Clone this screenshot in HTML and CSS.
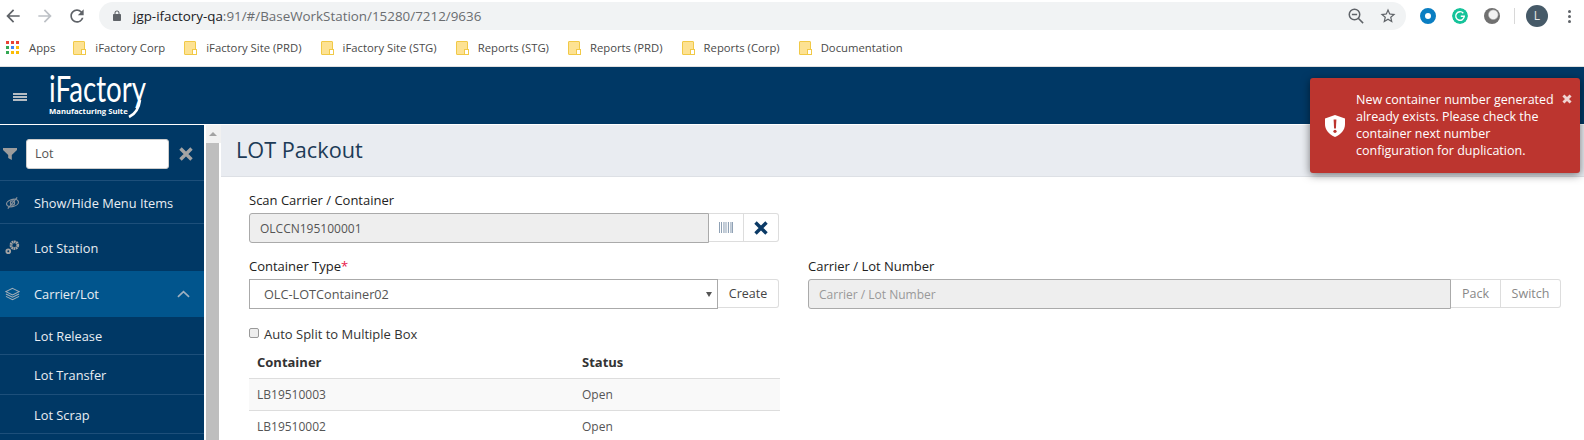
FILE: index.html
```html
<!DOCTYPE html>
<html lang="en">
<head>
    <meta charset="UTF-8">
    <title>LOT Packout | iFactory</title>
    <meta name="viewport" content="width=device-width, initial-scale=1.0">
    <link rel="stylesheet" href="styles.css">
</head>
<body>
    <div class="toolbar">
        <svg class="nav-icon" viewBox="0 0 24 24" fill="#5f6368"><path d="M20 11H7.83l5.59-5.59L12 4l-8 8 8 8 1.41-1.41L7.83 13H20v-2z"/></svg>
        <svg class="nav-icon" viewBox="0 0 24 24" fill="#bdc1c6"><path d="M4 11h12.17l-5.59-5.59L12 4l8 8-8 8-1.41-1.41L16.17 13H4v-2z"/></svg>
        <svg class="nav-icon" viewBox="0 0 24 24" fill="#5f6368"><path d="M17.65 6.35A7.958 7.958 0 0 0 12 4c-4.42 0-7.99 3.58-7.99 8s3.57 8 7.99 8c3.73 0 6.84-2.55 7.73-6h-2.08A5.99 5.99 0 0 1 12 18c-3.31 0-6-2.69-6-6s2.69-6 6-6c1.66 0 3.14.69 4.22 1.78L13 11h7V4l-2.35 2.35z"/></svg>
        <div class="omnibox">
            <svg class="lock" viewBox="0 0 24 24" fill="#5f6368"><path d="M18 8h-1V6c0-2.76-2.24-5-5-5S7 3.24 7 6v2H6c-1.1 0-2 .9-2 2v10c0 1.1.9 2 2 2h12c1.1 0 2-.9 2-2V10c0-1.1-.9-2-2-2zM9 6c0-1.66 1.34-3 3-3s3 1.34 3 3v2H9V6z"/></svg>
            <span class="url"><b>jgp-ifactory-qa</b>:91/#/BaseWorkStation/15280/7212/9636</span>
            <div class="omni-actions">
                <svg class="omni-icon" viewBox="0 0 24 24" fill="none" stroke="#5f6368" stroke-width="2"><circle cx="10" cy="10" r="7"/><path d="M6.5 10h7M15 15l6.5 6.5"/></svg>
                <svg class="omni-icon" viewBox="0 0 24 24" fill="#5f6368"><path d="M22 9.24l-7.19-.62L12 2 9.19 8.63 2 9.24l5.46 4.73L5.82 21 12 17.27 18.18 21l-1.63-7.03L22 9.24zM12 15.4l-3.76 2.27 1-4.28-3.32-2.88 4.38-.38L12 6.1l1.71 4.04 4.38.38-3.32 2.88 1 4.28L12 15.4z"/></svg>
            </div>
        </div>
        <div class="ext ext-blue"></div>
        <svg class="ext" viewBox="0 0 16 16"><circle cx="8" cy="8" r="8" fill="#15c39a"/><path d="M11.300 5.200A4.300 4.300 0 1 0 12.300 8.300H8.800" fill="none" stroke="#fff" stroke-width="1.400"/></svg>
        <div class="ext ext-gray"></div>
        <div class="separator"></div>
        <div class="avatar">L</div>
        <div class="kebab"><i></i><i></i><i></i></div>
    </div>

    <div class="bookmarks">
        <div class="apps-grid">
            <i class="r"></i><i class="r"></i><i class="r"></i>
            <i class="g"></i><i class="b"></i><i class="y"></i>
            <i class="g"></i><i class="y"></i><i class="y"></i>
        </div>
        <span class="mark mark-apps">Apps</span>
        <i class="folder"></i><span class="mark">iFactory Corp</span>
        <i class="folder"></i><span class="mark">iFactory Site (PRD)</span>
        <i class="folder"></i><span class="mark">iFactory Site (STG)</span>
        <i class="folder"></i><span class="mark">Reports (STG)</span>
        <i class="folder"></i><span class="mark">Reports (PRD)</span>
        <i class="folder"></i><span class="mark">Reports (Corp)</span>
        <i class="folder"></i><span class="mark">Documentation</span>
    </div>

    <div class="topbar">
        <div class="hamburger"><i></i><i></i><i></i></div>
        <div class="logo">
            <div class="logo-name">iFactory</div>
            <div class="logo-sub">Manufacturing Suite</div>
            <svg class="logo-tail" viewBox="0 0 14 18" fill="none" stroke="#fff" stroke-width="2.600"><path d="M12 0C11 8 7 14 1 17"/></svg>
        </div>
    </div>

    <div class="main">
        <div class="sidebar">
            <div class="filter">
                <svg class="filter-icon" viewBox="0 0 14 14" fill="#9c9c9c"><path d="M0 1h14v2L8.800 8v5L5.200 11V8L0 3z"/></svg>
                <input class="filter-input" type="text" value="Lot">
                <svg class="filter-clear" viewBox="0 0 14 14" fill="none" stroke="#a3a3a3" stroke-width="3.400"><path d="M1.500 1.500l11 11M12.500 1.500l-11 11"/></svg>
            </div>
            <div class="menu-item h43">
                <svg class="menu-icon" viewBox="0 0 16 16" fill="none" stroke="#87919b" stroke-width="1.300"><ellipse cx="8" cy="8" rx="6.500" ry="3.800" transform="rotate(-14 8 8)"/><circle cx="8" cy="8" r="2.200"/><path d="M3 14L13 2"/></svg>
                Show/Hide Menu Items
            </div>
            <div class="menu-item h47">
                <svg class="menu-icon" viewBox="0 0 16 16" fill="none" stroke="#a3a3a3"><circle cx="10" cy="5" r="3.600" stroke-width="3" stroke-dasharray="1.800 0.500"/><circle cx="3.500" cy="11.500" r="2" stroke-width="2"/></svg>
                Lot Station
            </div>
            <div class="menu-item menu-open">
                <svg class="menu-icon" viewBox="0 0 16 16" fill="none" stroke="#a5b0ba" stroke-width="1.100"><path d="M8 2l7 3.500-7 3.500-7-3.500z"/><path d="M1 8l7 3.500L15 8"/><path d="M1 10.500L8 14l7-3.500"/></svg>
                Carrier/Lot
                <svg class="chevron" viewBox="0 0 14 8" fill="none" stroke="#9fb0bf" stroke-width="1.800"><path d="M1 7l6-5.500L13 7"/></svg>
            </div>
            <div class="sub-item h38">Lot Release</div>
            <div class="sub-item h40">Lot Transfer</div>
            <div class="sub-item h39">Lot Scrap</div>
        </div>

        <div class="scrollbar">
            <div class="scroll-up"></div>
            <div class="scroll-thumb"></div>
        </div>

        <div class="content">
            <h1 class="page-title">LOT Packout</h1>
            <div class="form-grid">
                <div class="field">
                    <label>Scan Carrier / Container</label>
                    <div class="input-group">
                        <input class="form-input" type="text" value="OLCCN195100001" readonly>
                        <button class="addon addon-icon">
                            <svg class="barcode" viewBox="0 0 14 11" fill="#8fa1b5"><path d="M0 0h1v11H0zM2 0h1v11H2zM4 0h.6v11H4zM5.500 0h1v11h-1zM7.500 0h.6v11h-.6zM9 0h1v11H9zM11 0h.6v11H11zM12.500 0h1.500v11h-1.500z"/></svg>
                        </button>
                        <button class="addon addon-icon">
                            <svg class="clear-x" viewBox="0 0 14 14" fill="none" stroke="#0b3a66" stroke-width="3.400"><path d="M1.500 1.500l11 11M12.500 1.500l-11 11"/></svg>
                        </button>
                    </div>
                </div>
                <div></div>
                <div class="field">
                    <label>Container Type<span class="required">*</span></label>
                    <div class="input-group">
                        <div class="select-box">OLC-LOTContainer02<span class="caret"></span></div>
                        <button class="addon addon-text">Create</button>
                    </div>
                </div>
                <div class="field">
                    <label>Carrier / Lot Number</label>
                    <div class="input-group">
                        <input class="form-input" type="text" placeholder="Carrier / Lot Number" readonly>
                        <button class="addon addon-muted">Pack</button>
                        <button class="addon addon-muted">Switch</button>
                    </div>
                </div>
            </div>
            <div class="check-row">
                <input class="check" type="checkbox"> Auto Split to Multiple Box
            </div>
            <table class="grid">
                <tr><th class="col-container">Container</th><th>Status</th></tr>
                <tr class="odd"><td>LB19510003</td><td>Open</td></tr>
                <tr><td>LB19510002</td><td>Open</td></tr>
            </table>
        </div>
    </div>

    <div class="toast">
        <svg class="toast-icon" viewBox="0 0 20 22" fill="#fff"><path d="M10 0l10 3.500V9c0 6-4 10.500-10 13C4 19.500 0 15 0 9V3.500z"/><path d="M8.600 4.500h2.800l-.5 9H9.100z" fill="#bc352f"/><circle cx="10" cy="16.300" r="1.600" fill="#bc352f"/></svg>
        <div class="toast-text">New container number generated already exists. Please check the container next number configuration for duplication.</div>
        <svg class="toast-close" viewBox="0 0 14 14" fill="none" stroke="#f0d4d2" stroke-width="4"><path d="M2 2l10 10M12 2L2 12"/></svg>
    </div>
</body>
</html>
```

FILE: styles.css
```css
* {
    box-sizing: border-box;
}

html, body {
    margin: 0;
    height: 440px;
    overflow: hidden;
    background: white;
    font-family: "Open Sans", Arial, sans-serif;
    font-size: 13px;
    color: #333;
}

i {
    display: block;
}

/* browser chrome */
.toolbar {
    height: 30px;
    padding: 2px 0 0 3px;
    display: flex;
    align-items: center;
}

.nav-icon {
    width: 20px;
    height: 20px;
    margin-right: 12px;
}

.omnibox {
    width: 1307px;
    height: 28px;
    padding: 0 9px 0 12px;
    background: #f1f3f4;
    border-radius: 14px;
    display: flex;
    align-items: center;
}

.lock {
    width: 12px;
    height: 12px;
}

.url {
    margin-left: 10px;
    font-size: 13.400px;
    color: #6a6d70;
}

.url b {
    font-weight: 400;
    color: #202124;
}

.omni-actions {
    margin-left: auto;
    display: flex;
    gap: 14px;
}

.omni-icon {
    width: 18px;
    height: 18px;
}

.ext {
    width: 16px;
    height: 16px;
    margin-left: 16px;
    border-radius: 50%;
}

.ext-blue {
    margin-left: 14px;
    border: 5px solid #0a7ec2;
    background: white;
}

.ext-gray {
    background: radial-gradient(circle at 58% 42%, #f2f2f2 0 4px, #707070 5.500px);
}

.separator {
    width: 1px;
    height: 16px;
    margin-left: 14px;
    background: #d8d8d8;
}

.avatar {
    width: 22px;
    height: 22px;
    margin-left: 11px;
    border-radius: 50%;
    background: #465a68;
    color: #e6e6e6;
    font-size: 12px;
    line-height: 22px;
    text-align: center;
}

.kebab {
    margin-left: 20px;
    display: flex;
    flex-direction: column;
    gap: 2px;
}

.kebab i {
    width: 3px;
    height: 3px;
    border-radius: 50%;
    background: #5f6368;
}

.bookmarks {
    height: 37px;
    padding: 0 0 1px 6px;
    border-bottom: 1px solid #e0e0e0;
    display: flex;
    align-items: center;
}

.apps-grid {
    width: 13px;
    height: 13px;
    display: grid;
    grid-template-columns: repeat(3, 3px);
    grid-template-rows: repeat(3, 3px);
    gap: 2px;
}

.apps-grid .r { background: #ea4335; }
.apps-grid .g { background: #34a853; }
.apps-grid .b { background: #4285f4; }
.apps-grid .y { background: #fbbc05; }

.mark {
    font-size: 11.300px;
    color: #4a4a4a;
    margin-right: 19px;
    white-space: nowrap;
}

.mark-apps {
    margin-left: 10px;
    margin-right: 18px;
}

.folder {
    position: relative;
    width: 12px;
    height: 14px;
    margin-right: 10px;
    background: #fde293;
    border: 1px solid #f1c947;
    border-radius: 1px;
}

.folder::after {
    content: "";
    position: absolute;
    right: -2px;
    bottom: -1px;
    width: 3px;
    height: 4px;
    background: white;
    border: 1px solid #f1c947;
}

/* app */
.topbar {
    height: 57px;
    background: #003865;
    display: flex;
    align-items: flex-start;
}

.hamburger {
    margin: 26px 0 0 13px;
    width: 14px;
    display: flex;
    flex-direction: column;
    gap: 1px;
}

.hamburger i {
    height: 2px;
    background: #b5bcc3;
}

.logo {
    position: relative;
    width: 100px;
    margin: 3px 0 0 22px;
    color: white;
}

.logo-name {
    font-family: Lato, sans-serif;
    font-size: 36px;
    line-height: 36px;
    transform: scaleX(0.77);
    transform-origin: left;
}

.logo-sub {
    font-size: 7.700px;
    line-height: 10px;
    font-weight: 700;
    white-space: nowrap;
}

.logo-tail {
    position: absolute;
    left: 79px;
    top: 30px;
    width: 14px;
    height: 18px;
}

.main {
    margin-top: 1px;
    height: 315px;
    display: flex;
}

.sidebar {
    width: 204px;
    flex-shrink: 0;
    background: #003865;
    color: #e9eef3;
}

.filter {
    height: 56px;
    padding: 2px 0 0 3px;
    border-bottom: 1px solid #1d4f7a;
    display: flex;
    align-items: center;
}

.filter-icon {
    width: 14px;
    height: 14px;
}

.filter-input {
    width: 143px;
    height: 30px;
    margin-left: 9px;
    padding: 0 8px;
    border: 1px solid #ccc;
    border-radius: 3px;
    font-family: inherit;
    font-size: 12.500px;
    color: #555;
}

.filter-clear {
    width: 14px;
    height: 14px;
    margin-left: 10px;
}

.menu-item,
.sub-item {
    padding-left: 34px;
    display: flex;
    align-items: center;
    border-bottom: 1px solid #1d4f7a;
    font-size: 12.800px;
}

.h43 { height: 43px; padding-top: 1px; }
.h47 { height: 47px; border-bottom: 0; }
.h38 { height: 38px; }
.h40 { height: 40px; }
.h39 { height: 39px; padding-top: 1px; }

.menu-icon {
    position: relative;
    left: -29px;
    width: 15px;
    height: 16px;
    margin-right: -15px;
}

.menu-open {
    height: 46px;
    background: #01558d;
    border-bottom: 0;
}

.chevron {
    width: 13px;
    height: 8px;
    margin-left: auto;
    margin-right: 14px;
}

.scrollbar {
    width: 17px;
    padding-left: 2px;
    flex-shrink: 0;
    background: white;
}

.scroll-up {
    height: 18px;
    background: #f1f1f1;
    position: relative;
}

.scroll-up::after {
    content: "";
    position: absolute;
    left: 3px;
    top: 7px;
    border: 4px solid transparent;
    border-top: 0;
    border-bottom: 4px solid #a3a3a3;
}

.scroll-thumb {
    height: 297px;
    width: 13px;
    background: #bebebe;
}

.content {
    flex: 1;
    min-width: 0;
}

.page-title {
    margin: 0;
    height: 52px;
    padding-left: 15px;
    background: #e9ecf1;
    border-bottom: 1px solid #dde0e5;
    font-size: 21.700px;
    font-weight: 400;
    line-height: 50px;
    color: #1d3b57;
}

.form-grid {
    padding: 14px 0 0 28px;
    display: grid;
    grid-template-columns: 530px 753px;
    column-gap: 29px;
    row-gap: 14px;
}

label {
    display: block;
    height: 22px;
    line-height: 18px;
    font-size: 13px;
    color: #222;
}

.required {
    color: #e8194b;
}

.input-group {
    height: 30px;
    display: flex;
}

.form-input {
    flex: 1;
    min-width: 0;
    height: 30px;
    padding: 0 10px;
    background: #eee;
    border: 1px solid #aaa;
    border-radius: 3px 0 0 3px;
    font-family: inherit;
    font-size: 12px;
    color: #555;
    outline: none;
}

.form-input::placeholder {
    color: #999;
}

.select-box {
    flex: 1;
    min-width: 0;
    height: 30px;
    padding: 0 0 0 14px;
    border: 1px solid #aaa;
    font-size: 12.700px;
    line-height: 28px;
    color: #555;
    display: flex;
    justify-content: space-between;
    align-items: center;
}

.caret {
    margin-right: 5px;
    border: 3.500px solid transparent;
    border-top: 5px solid #555;
    border-bottom: 0;
}

.addon {
    height: 29px;
    padding: 0;
    background: white;
    border: 1px solid #ddd;
    border-left: 0;
    font-family: inherit;
    font-size: 12.500px;
    color: #444;
}

.addon:last-child {
    border-radius: 0 3px 3px 0;
}

.addon-icon {
    width: 35px;
    display: flex;
    align-items: center;
    justify-content: center;
}

.addon-text {
    width: 61px;
}

.addon-muted {
    color: #888;
    width: 50px;
}

.addon-muted:last-child {
    width: 60px;
}

.barcode {
    width: 14px;
    height: 11px;
}

.clear-x {
    width: 14px;
    height: 14px;
}

.check-row {
    margin: 16px 0 0 28px;
    height: 18px;
    display: flex;
    align-items: center;
    gap: 5px;
    font-size: 13px;
    color: #333;
}

.check {
    appearance: none;
    width: 10px;
    height: 10px;
    margin: -2px 0 0;
    background: #eee;
    border: 1px solid #999;
    border-radius: 2px;
}

.grid {
    margin: 3px 0 0 28px;
    width: 531px;
    border-collapse: collapse;
    font-size: 12px;
    color: #555;
}

.grid th,
.grid td {
    height: 32px;
    padding: 0 0 0 8px;
    text-align: left;
    border-bottom: 1px solid #ddd;
}

.grid th {
    font-size: 13px;
    font-weight: 700;
    color: #333;
}

.grid .col-container {
    width: 325px;
}

.grid .odd {
    background: #f9f9f9;
}

/* error notification over the page */
.toast {
    position: absolute;
    left: 1310px;
    top: 78px;
    width: 270px;
    height: 95px;
    padding-left: 15px;
    background: #bc352f;
    border-radius: 3px;
    box-shadow: 0 2px 8px rgba(0, 0, 0, 0.5);
    color: white;
    display: flex;
    align-items: center;
}

.toast-icon {
    width: 20px;
    height: 22px;
    flex-shrink: 0;
}

.toast-text {
    width: 205px;
    margin-left: 11px;
    padding-bottom: 2px;
    font-size: 12.500px;
    line-height: 17px;
}

.toast-close {
    position: absolute;
    right: 8px;
    top: 16px;
    width: 10px;
    height: 10px;
}
```
